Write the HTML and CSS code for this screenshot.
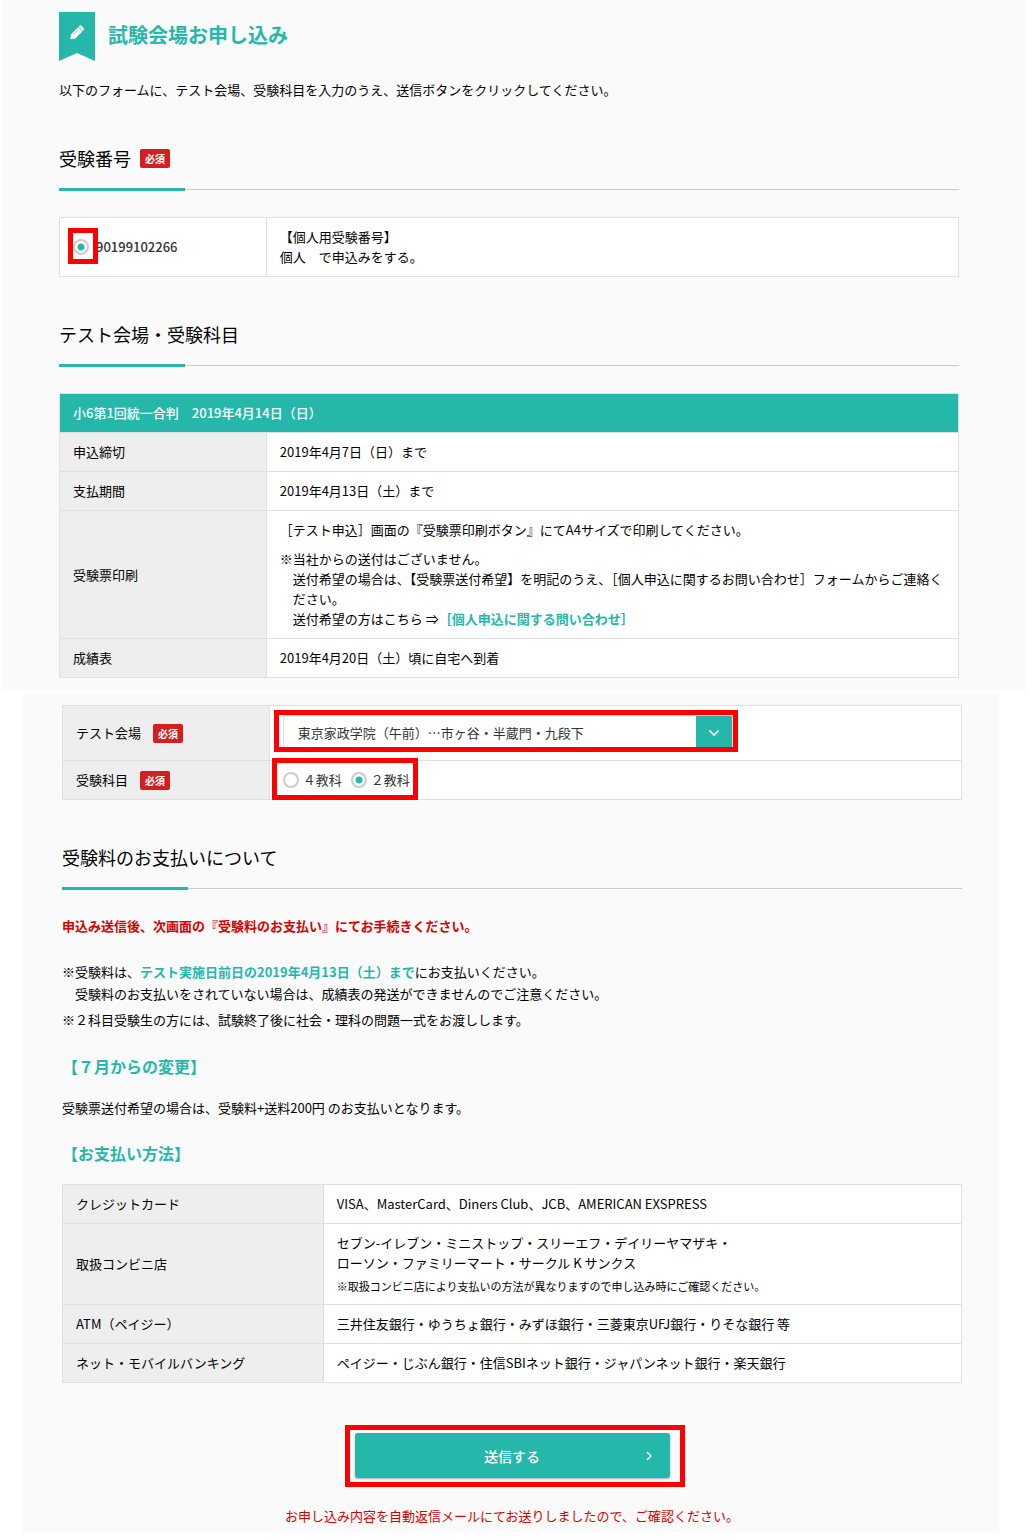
FILE: index.html
```html
<!DOCTYPE html>
<html lang="ja">
<head>
  <meta charset="UTF-8">
  <meta name="viewport" content="width=device-width, initial-scale=1.0">
  <title>試験会場お申し込み</title>
  <link rel="stylesheet" href="styles.css">
</head>
<body>
  <form>
    <!-- 受験番号・テスト内容 -->
    <div class="panel panel-top">
      <div class="page-title">
        <svg class="ribbon" width="36" height="49" viewBox="0 0 36 49" aria-hidden="true">
          <path fill="#26b7ab" d="M0 0h36v49l-18-8-18 8z"/>
          <g transform="translate(17 21.5) rotate(45)" fill="#fff">
            <path d="M-3-8q0-1.200 1.200-1.200h3.600q1.200 0 1.200 1.200v1.400h-6z"/>
            <path d="M-3-6h6v10l-3 4-3-4z"/>
            <path d="M-1-4v6.500" stroke="#26b7ab" stroke-width=".6"/>
          </g>
        </svg>
        <h1>試験会場お申し込み</h1>
      </div>
      <p class="lead">以下のフォームに、テスト会場、受験科目を入力のうえ、送信ボタンをクリックしてください。</p>

      <h2>受験番号<span class="required">必須</span></h2>
      <table class="number-table">
        <tr>
          <td>
            <label class="radio number">
              <span class="mark mark-number"><input type="radio" name="number" checked></span>90199102266
            </label>
          </td>
          <td>【個人用受験番号】<br>個人　で申込みをする。</td>
        </tr>
      </table>

      <h2>テスト会場・受験科目</h2>
      <table>
        <tr>
          <th class="table-head" colspan="2">小6第1回統一合判　2019年4月14日（日）</th>
        </tr>
        <tr>
          <th>申込締切</th>
          <td>2019年4月7日（日）まで</td>
        </tr>
        <tr>
          <th>支払期間</th>
          <td>2019年4月13日（土）まで</td>
        </tr>
        <tr>
          <th>受験票印刷</th>
          <td>
            <p>［テスト申込］画面の『受験票印刷ボタン』にてA4サイズで印刷してください。</p>
            <p class="note">※当社からの送付はございません。<br>
              送付希望の場合は、【受験票送付希望】を明記のうえ、［個人申込に関するお問い合わせ］フォームからご連絡ください。<br>
              送付希望の方はこちら ⇒<a href="#">［個人申込に関する問い合わせ］</a></p>
          </td>
        </tr>
        <tr>
          <th>成績表</th>
          <td>2019年4月20日（土）頃に自宅へ到着</td>
        </tr>
      </table>
    </div>

    <!-- 会場の選択・お支払い -->
    <div class="panel panel-bottom">
      <table>
        <tr>
          <th><label for="place">テスト会場</label><span class="required">必須</span></th>
          <td>
            <div class="mark mark-select">
              <select id="place">
                <option>東京家政学院（午前）…市ヶ谷・半蔵門・九段下</option>
              </select>
              <span class="arrow">
                <svg width="12" height="8" viewBox="0 0 12 8" aria-hidden="true"><path d="M1.500 1.500L6 6l4.500-4.500" fill="none" stroke="#fff" stroke-width="1.700"/></svg>
              </span>
            </div>
          </td>
        </tr>
        <tr>
          <th>受験科目<span class="required">必須</span></th>
          <td>
            <div class="mark mark-subject">
              <label class="radio"><input type="radio" name="subject">４教科</label>
              <label class="radio"><input type="radio" name="subject" checked>２教科</label>
            </div>
          </td>
        </tr>
      </table>

      <h2>受験料のお支払いについて</h2>
      <p class="alert">申込み送信後、次画面の『受験料のお支払い』にてお手続きください。</p>
      <ul class="notes">
        <li>※受験料は、<strong>テスト実施日前日の2019年4月13日（土）まで</strong>にお支払いください。<br>受験料のお支払いをされていない場合は、成績表の発送ができませんのでご注意ください。</li>
        <li>※２科目受験生の方には、試験終了後に社会・理科の問題一式をお渡しします。</li>
      </ul>

      <h3>【７月からの変更】</h3>
      <p>受験票送付希望の場合は、受験料+送料200円 のお支払いとなります。</p>

      <h3>【お支払い方法】</h3>
      <table class="pay-table">
        <tr>
          <th>クレジットカード</th>
          <td>VISA、MasterCard、Diners Club、JCB、AMERICAN EXSPRESS</td>
        </tr>
        <tr>
          <th>取扱コンビニ店</th>
          <td>
            <p>セブン-イレブン・ミニストップ・スリーエフ・デイリーヤマザキ・<br>ローソン・ファミリーマート・サークル K サンクス</p>
            <p class="small">※取扱コンビニ店により支払いの方法が異なりますので申し込み時にご確認ください。</p>
          </td>
        </tr>
        <tr>
          <th>ATM（ペイジー）</th>
          <td>三井住友銀行・ゆうちょ銀行・みずほ銀行・三菱東京UFJ銀行・りそな銀行 等</td>
        </tr>
        <tr>
          <th>ネット・モバイルバンキング</th>
          <td>ペイジー・じぶん銀行・住信SBIネット銀行・ジャパンネット銀行・楽天銀行</td>
        </tr>
      </table>

      <div class="submit">
        <div class="mark mark-submit">
          <button type="button">送信する
            <svg width="6" height="10" viewBox="0 0 6 10" aria-hidden="true"><path d="M1 1l4 4-4 4" fill="none" stroke="#fff" stroke-width="1.500"/></svg>
          </button>
        </div>
        <p>お申し込み内容を自動返信メールにてお送りしましたので、ご確認ください。</p>
      </div>
    </div>
  </form>
</body>
</html>
```
FILE: styles.css
```css
* {
  box-sizing: border-box;
}
body {
  margin: 0;
  background: #fff;
  color: #000;
  font-family: "Noto Sans CJK JP", sans-serif;
  font-size: 13px;
  line-height: 20px;
}
h1, h2, h3, p, ul {
  margin: 0;
  padding: 0;
}
.panel {
  background: #fafafa;
}
.panel-top {
  margin: 0 4px 4px 3px;
  padding: 12px 67px 12px 56px;
}
.panel-bottom {
  margin: 0 31px 0 22px;
  padding: 11px 37px 6px 40px;
}

/* headings */
.page-title {
  display: flex;
  gap: 13px;
}
h1 {
  color: #26b7ab;
  font-size: 20px;
  line-height: 46px;
}
.lead {
  margin: 19px 0 45px;
}
h2 {
  position: relative;
  margin: 44px 0 27px;
  padding-bottom: 18px;
  border-bottom: 1px solid #ccc;
  font-size: 18px;
  font-weight: normal;
  line-height: 26px;
}
h2::after {
  content: "";
  position: absolute;
  left: 0;
  bottom: -2px;
  width: 14%;
  height: 3px;
  background: #26b7ab;
}
h3 {
  color: #26b7ab;
  font-size: 16px;
  line-height: 24px;
}
.required {
  display: inline-block;
  margin-left: 12px;
  padding: 0 5px;
  border-radius: 2px;
  background: #d31f1f;
  color: #fff;
  font-size: 10px;
  font-weight: bold;
  line-height: 19px;
}
h2 .required {
  margin-left: 9px;
  vertical-align: 3px;
}

/* tables */
table {
  width: 100%;
  border-collapse: collapse;
  background: #fff;
}
th, td {
  padding: 9px 13px;
  border: 1px solid #e0e0e0;
  text-align: left;
  font-weight: normal;
}
th {
  width: 23%;
  background: #eee;
}
.number-table td:first-child {
  width: 23%;
}
.pay-table th {
  width: 29%;
}
.table-head {
  background: #26b7ab;
  color: #fff;
  font-weight: 500;
}
.note {
  margin-top: 9px;
  padding-left: 13px;
  text-indent: -13px;
}
.small {
  margin-top: 4px;
  font-size: 11px;
  line-height: 18px;
}
a {
  color: #26b7ab;
  font-weight: bold;
  text-decoration: none;
}

/* form parts */
.radio {
  display: inline-flex;
  align-items: center;
  gap: 4px;
  color: #333;
  vertical-align: top;
}
.number {
  gap: 7px;
  font-weight: 500;
}
input[type="radio"] {
  appearance: none;
  display: block;
  width: 16px;
  height: 16px;
  margin: 0;
  border: 2px solid #ccc;
  border-radius: 50%;
  background: #fff;
}
input[type="radio"]:checked {
  background: radial-gradient(circle, #26b7ab 3px, #fff 4px);
}
select {
  appearance: none;
  display: block;
  width: 100%;
  height: 36px;
  padding: 0 50px 0 14px;
  border: 1px solid #ddd;
  border-radius: 2px;
  background: #fff;
  color: #333;
  font: inherit;
}
.arrow {
  position: absolute;
  top: 1px;
  right: 1px;
  bottom: 1px;
  display: flex;
  align-items: center;
  justify-content: center;
  width: 36px;
  background: #26b7ab;
  pointer-events: none;
}

/* red frames around the parts to fill in */
.mark {
  position: relative;
}
.mark::after {
  content: "";
  position: absolute;
  border: 5px solid #f00;
  pointer-events: none;
}
.mark-number::after {
  inset: -11px -9px -9px -5px;
}
.mark-select {
  width: 450px;
  max-width: 100%;
}
.mark-select::after {
  inset: -5px -5px -1px -9px;
}
.mark-subject {
  display: inline-flex;
  gap: 9px;
  vertical-align: top;
}
.mark-subject::after {
  inset: -12px -8px -10px -11px;
}

/* payment */
.alert {
  color: #d70000;
  font-weight: bold;
}
.notes {
  margin: 25px 0 23px;
  list-style: none;
  line-height: 22px;
}
.notes li {
  margin-bottom: 4px;
  padding-left: 13px;
  text-indent: -13px;
}
.notes strong {
  color: #26b7ab;
}
h3 + p {
  margin: 20px 0 23px;
}
h3 + table {
  margin-top: 19px;
}
.submit {
  display: flex;
  flex-direction: column;
  align-items: center;
  gap: 28px;
  margin-top: 50px;
  color: #d70000;
}
.mark-submit {
  width: 35%;
}
.mark-submit::after {
  inset: -8px -15px -9px -10px;
}
button {
  position: relative;
  display: block;
  width: 100%;
  height: 45px;
  border: 0;
  border-radius: 3px;
  background: #26b7ab;
  box-shadow: 0 1px 2px rgba(0, 0, 0, 0.3);
  color: #fff;
  font-family: inherit;
  font-size: 14px;
  font-weight: 500;
  cursor: pointer;
}
button svg {
  position: absolute;
  top: 18px;
  right: 18px;
}
```
